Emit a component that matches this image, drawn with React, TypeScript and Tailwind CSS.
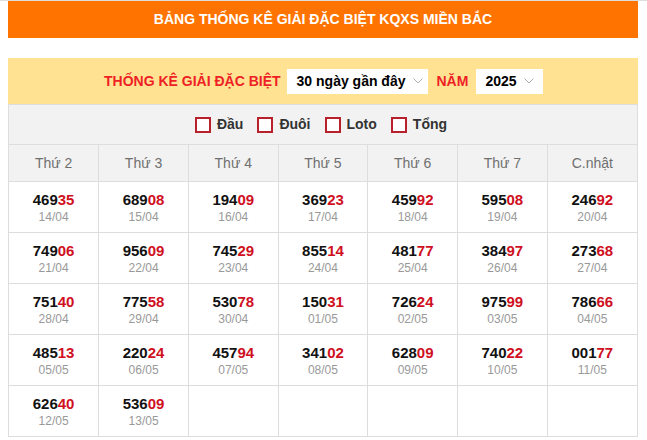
import React from 'react';

const days = ['Thứ 2', 'Thứ 3', 'Thứ 4', 'Thứ 5', 'Thứ 6', 'Thứ 7', 'C.nhật'];

const results: [string, string][][] = [
  [['46935', '14/04'], ['68908', '15/04'], ['19409', '16/04'], ['36923', '17/04'], ['45992', '18/04'], ['59508', '19/04'], ['24692', '20/04']],
  [['74906', '21/04'], ['95609', '22/04'], ['74529', '23/04'], ['85514', '24/04'], ['48177', '25/04'], ['38497', '26/04'], ['27368', '27/04']],
  [['75140', '28/04'], ['77558', '29/04'], ['53078', '30/04'], ['15031', '01/05'], ['72624', '02/05'], ['97599', '03/05'], ['78666', '04/05']],
  [['48513', '05/05'], ['22024', '06/05'], ['45794', '07/05'], ['34102', '08/05'], ['62809', '09/05'], ['74022', '10/05'], ['00177', '11/05']],
  [['62640', '12/05'], ['53609', '13/05']],
];

function Chevron() {
  return (
    <svg width="10" height="6" viewBox="0 0 10 6" className="ml-[7px]">
      <path d="M0.5 0.5 L5 5 L9.5 0.5" fill="none" stroke="#b0b0b0" strokeWidth="1" />
    </svg>
  );
}

function Check({ label }: { label: string }) {
  return (
    <label className="flex items-center gap-[6px]">
      <span className="w-4 h-4 border-2 border-[#b8202c] bg-white"></span>
      <span className="text-[14px] font-bold text-[#333]">{label}</span>
    </label>
  );
}

export default function App() {
  return (
    <div className="w-[647px] h-[440px] bg-white border-t border-[#dedede] overflow-hidden" style={{ fontFamily: '"Liberation Sans", Arial, sans-serif' }}>
      <div className="ml-2 w-[630px]">
        {/* header */}
        <div className="h-[37px] bg-[#ff7300] flex items-center justify-center">
          <h1 className="text-white font-bold text-[14px] uppercase">BẢNG THỐNG KÊ GIẢI ĐẶC BIỆT KQXS MIỀN BẮC</h1>
        </div>

        {/* filter bar */}
        <div className="mt-5 h-[46px] bg-[#ffe292] flex items-center pl-[96px]">
          <span className="text-[#ee1f25] font-bold text-[14px]">THỐNG KÊ GIẢI ĐẶC BIỆT</span>
          <div className="ml-[6px] h-[25px] bg-white flex items-center pl-[10px] pr-[5px] text-[14px] font-bold text-black">
            30 ngày gần đây
            <Chevron />
          </div>
          <span className="ml-[9px] text-[#ee1f25] font-bold text-[14px]">NĂM</span>
          <div className="ml-[8px] h-[25px] bg-white flex items-center pl-[9px] pr-[9px] text-[14px] font-bold text-black">
            2025
            <Chevron />
          </div>
        </div>

        {/* table */}
        <div className="border-x border-[#dddddd]">
          <div className="h-[40px] bg-[#f2f2f2] border-t border-[#dddddd] flex items-center justify-center gap-[14px] pr-[4px]">
            <Check label="Đầu" />
            <Check label="Đuôi" />
            <Check label="Loto" />
            <Check label="Tổng" />
          </div>
          <table className="w-full table-fixed border-collapse">
            <thead>
              <tr className="h-[37px] bg-[#f2f2f2]">
                {days.map((d) => (
                  <th key={d} className="border border-[#dddddd] first:border-l-0 last:border-r-0 font-normal text-[14px] text-[#6f6f6f]">
                    {d}
                  </th>
                ))}
              </tr>
            </thead>
            <tbody>
              {results.map((row, ri) => (
                <tr key={ri} className="h-[51px]">
                  {Array.from({ length: 7 }).map((_, ci) => {
                    const cell = row[ci];
                    return (
                      <td key={ci} className="border border-[#dddddd] first:border-l-0 last:border-r-0 text-center align-middle">
                        {cell && (
                          <div className="flex flex-col items-center leading-none">
                            <div className="text-[15px] font-bold text-[#111]">
                              {cell[0].slice(0, 3)}
                              <span className="text-[#d0101e]">{cell[0].slice(3)}</span>
                            </div>
                            <div className="text-[12px] text-[#999] mt-[4px]">{cell[1]}</div>
                          </div>
                        )}
                      </td>
                    );
                  })}
                </tr>
              ))}
            </tbody>
          </table>
        </div>
      </div>
    </div>
  );
}
